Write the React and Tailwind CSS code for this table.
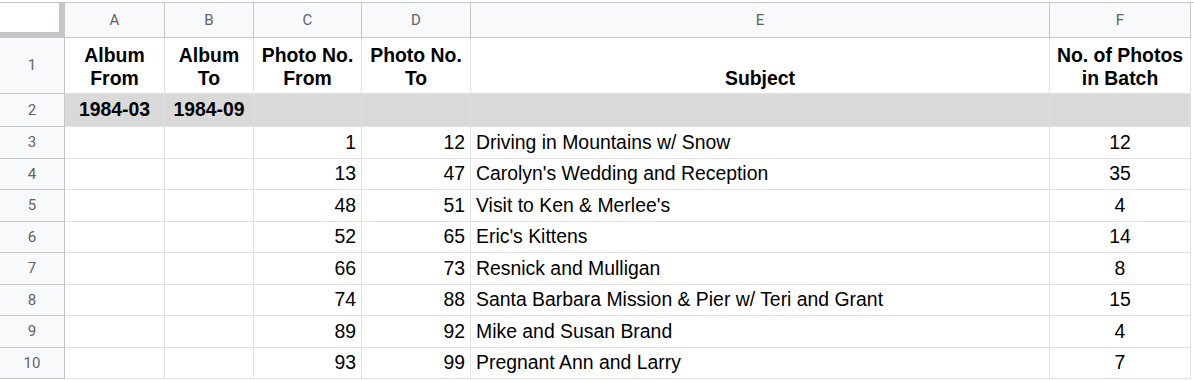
import React from "react";

const rows = [
  [3, "1", "12", "Driving in Mountains w/ Snow", "12"],
  [4, "13", "47", "Carolyn's Wedding and Reception", "35"],
  [5, "48", "51", "Visit to Ken & Merlee's", "4"],
  [6, "52", "65", "Eric's Kittens", "14"],
  [7, "66", "73", "Resnick and Mulligan", "8"],
  [8, "74", "88", "Santa Barbara Mission & Pier w/ Teri and Grant", "15"],
  [9, "89", "92", "Mike and Susan Brand", "4"],
  [10, "93", "99", "Pregnant Ann and Larry", "7"],
];

const cols = "grid grid-cols-[65px_100px_89px_108px_109px_579px_141px]";
const cell = "border-r border-b border-[#e1e1e1] flex items-center px-[5px] overflow-hidden whitespace-nowrap";
const rowHead =
  "bg-[#f8f9fa] border-r border-b border-[#c4c7c5] flex items-center justify-center text-[15px] text-[#5f6368] font-['Roboto',sans-serif] font-normal";
const colHead =
  "bg-[#f8f9fa] border-r border-b border-[#c4c7c5] flex items-center justify-center text-[15px] text-[#5f6368] font-['Roboto',sans-serif]";

export default function App() {
  return (
    <div
      className="w-[1194px] h-[380px] bg-white overflow-hidden pt-[2px] text-black"
      style={{ fontFamily: '"Liberation Sans", Arial, sans-serif' }}
    >
      <div className="border-t border-[#c4c7c5]">
        {/* column letters */}
        <div className={`${cols} h-[35px]`}>
          <div className="bg-white border-r-[6px] border-b-[6px] border-[#c4c7c5]" />
          {["A", "B", "C", "D", "E", "F"].map((c) => (
            <div key={c} className={colHead}>
              {c}
            </div>
          ))}
        </div>

        {/* row 1: titles */}
        <div className={`${cols} h-[56px] text-[19.4px] font-bold leading-[23px]`}>
          <div className={rowHead}>1</div>
          <div className={`${cell} justify-center text-center items-end pb-[3px]`}>
            Album
            <br />
            From
          </div>
          <div className={`${cell} justify-center text-center items-end pb-[3px]`}>
            Album
            <br />
            To
          </div>
          <div className={`${cell} justify-center text-center items-end pb-[3px]`}>
            Photo No.
            <br />
            From
          </div>
          <div className={`${cell} justify-center text-center items-end pb-[3px]`}>
            Photo No.
            <br />
            To
          </div>
          <div className={`${cell} justify-center items-end pb-[3px]`}>Subject</div>
          <div className={`${cell} justify-center text-center items-end pb-[3px]`}>
            No. of Photos
            <br />
            in Batch
          </div>
        </div>

        {/* row 2: album range */}
        <div className={`${cols} h-[33px] text-[19.4px] font-bold`}>
          <div className={rowHead}>2</div>
          <div className={`${cell} bg-[#d9d9d9] border-[#c9c9c9] justify-center`}>1984-03</div>
          <div className={`${cell} bg-[#d9d9d9] border-[#c9c9c9] justify-center`}>1984-09</div>
          <div className={`${cell} bg-[#d9d9d9] border-[#c9c9c9]`} />
          <div className={`${cell} bg-[#d9d9d9] border-[#c9c9c9]`} />
          <div className={`${cell} bg-[#d9d9d9] border-[#c9c9c9]`} />
          <div className={`${cell} bg-[#d9d9d9] border-[#c9c9c9]`} />
        </div>

        {/* data rows */}
        {rows.map(([n, from, to, subject, count]) => (
          <div key={n} className={`${cols} h-[31.5px] text-[19.4px]`}>
            <div className={rowHead}>{n}</div>
            <div className={cell} />
            <div className={cell} />
            <div className={`${cell} justify-end`}>{from}</div>
            <div className={`${cell} justify-end`}>{to}</div>
            <div className={cell}>{subject}</div>
            <div className={`${cell} justify-center`}>{count}</div>
          </div>
        ))}
      </div>
    </div>
  );
}
